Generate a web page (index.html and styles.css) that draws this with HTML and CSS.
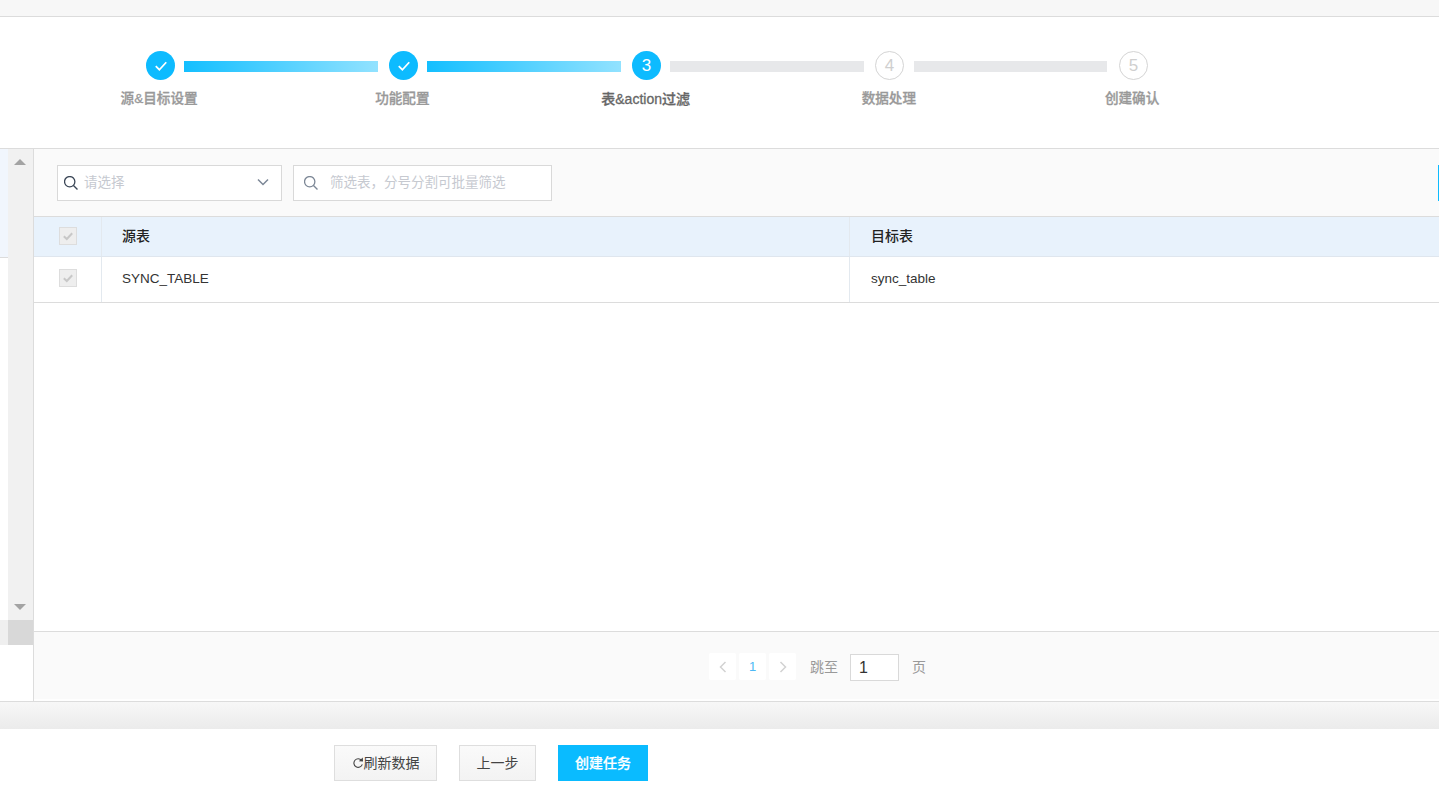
FILE: index.html
```html
<!DOCTYPE html>
<html lang="zh-CN">
<head>
<meta charset="utf-8">
<title>创建任务</title>
<link rel="stylesheet" href="styles.css">
</head>
<body>
<div class="top-band"></div>
<section class="stepper">
  <div class="track">
    <span class="dot done"><svg viewBox="0 0 12 12" class="tick"><path d="M1.5 6.2 4.6 9.2 10.5 2.8"/></svg></span>
    <span class="bar on b1"></span>
    <span class="dot done"><svg viewBox="0 0 12 12" class="tick"><path d="M1.5 6.2 4.6 9.2 10.5 2.8"/></svg></span>
    <span class="bar on b1"></span>
    <span class="dot current">3</span>
    <span class="bar b1"></span>
    <span class="dot todo">4</span>
    <span class="bar b2"></span>
    <span class="dot todo">5</span>
  </div>
  <div class="labels">
    <span>源&amp;目标设置</span>
    <span>功能配置</span>
    <span class="active">表&amp;action过滤</span>
    <span>数据处理</span>
    <span>创建确认</span>
  </div>
</section>
<main class="body">
  <aside class="side">
    <div class="list">
      <div class="list-sel"></div>
      <div class="list-rest"></div>
      <div class="list-end"></div>
    </div>
    <div class="scroll">
      <span class="arrow up"></span>
      <span class="scroll-space"></span>
      <span class="arrow down"></span>
      <span class="thumb"></span>
    </div>
  </aside>
  <div class="content">
    <div class="toolbar">
      <label class="field sel">
        <svg class="mag" viewBox="1.5 1.5 13 13"><circle cx="6.8" cy="6.8" r="4.8"/><path d="M10.3 10.3 14 14"/></svg>
        <input class="inp" placeholder="请选择">
        <svg class="chev" viewBox="0 0 12 8"><path d="M1 1.5 6 6.5 11 1.5"/></svg>
      </label>
      <label class="field flt">
        <svg class="mag grey" viewBox="1.5 1.5 13 13"><circle cx="6.8" cy="6.8" r="4.8"/><path d="M10.3 10.3 14 14"/></svg>
        <input class="inp" placeholder="筛选表，分号分割可批量筛选">
      </label>
      <button class="edge-btn" type="button"></button>
    </div>
    <div class="table">
      <div class="tr head">
        <div class="c0"><span class="chk"><svg viewBox="0 0 12 12"><path d="M1.8 6.2 4.8 9 10.2 3.2"/></svg></span></div>
        <div class="c1">源表</div>
        <div class="c2">目标表</div>
      </div>
      <div class="tr row">
        <div class="c0"><span class="chk"><svg viewBox="0 0 12 12"><path d="M1.8 6.2 4.8 9 10.2 3.2"/></svg></span></div>
        <div class="c1">SYNC_TABLE</div>
        <div class="c2">sync_table</div>
      </div>
    </div>
    <div class="pager">
      <span class="pg"><svg viewBox="0 0 8 12"><path d="M6.5 1 1.5 6 6.5 11"/></svg></span>
      <span class="pg cur">1</span>
      <span class="pg"><svg viewBox="0 0 8 12"><path d="M1.5 1 6.5 6 1.5 11"/></svg></span>
      <span class="jump">跳至</span>
      <input class="page-inp" value="1">
      <span class="unit">页</span>
    </div>
  </div>
</main>
<div class="shade"></div>
<footer class="footer">
  <button class="btn refresh" type="button"><svg viewBox="0 0 12 12"><path d="M9.6 3.4A4.3 4.3 0 1 0 10.3 7.4"/><path class="head-arrow" d="M6.8 4.2 11 4.4 10.8 0.4z"/></svg>刷新数据</button>
  <button class="btn prev" type="button">上一步</button>
  <button class="btn primary" type="button">创建任务</button>
</footer>
</body>
</html>
```
FILE: styles.css
```css
* { box-sizing: border-box; }
html, body { margin: 0; height: 792px; overflow: hidden; background: #fff; }
body { font-family: "Liberation Sans", "Noto Sans CJK SC", sans-serif; font-size: 14px; color: #333; }

.top-band { height: 17px; background: #f7f7f7; border-bottom: 1px solid #dcdcdc; }

.stepper { height: 132px; padding-top: 34px; border-bottom: 1px solid #dcdcdc; background: #fff; }
.track { display: flex; align-items: flex-start; height: 29px; padding-left: 146px; }
.dot { flex: none; width: 29px; height: 29px; border-radius: 50%; display: flex; align-items: center; justify-content: center; font-size: 17px; }
.dot.done, .dot.current { background: #0dbbff; color: #fff; }
.dot.todo { border: 1px solid #d4d4d4; color: #cfcfcf; }
.tick { width: 14px; height: 14px; fill: none; stroke: #fff; stroke-width: 1.5; }
.bar { flex: none; height: 11px; margin: 10px 11px 0 9px; background: #e7e8ea; }
.bar.b1 { width: 194px; }
.bar.b2 { width: 193px; margin-left: 10px; margin-right: 12px; }
.bar.on { background: linear-gradient(90deg, #14bfff, #92e2ff); }
.labels { display: grid; grid-template-columns: repeat(5, 243.25px); margin: 10px 0 0 37.5px; text-align: center; font-size: 13.6px; line-height: 18px; font-weight: 500; color: #999; -webkit-text-stroke: 0.3px currentColor; }
.labels .active { color: #666; font-size: 14px; }

.body { display: flex; height: 553px; border-bottom: 1px solid #dcdcdc; }
.side { flex: none; width: 34px; display: flex; height: 552px; border-right: 1px solid #dcdcdc; }
.list { width: 8px; height: 496px; display: flex; flex-direction: column; }
.list-sel { height: 109px; background: #f1f6fd; border-bottom: 1px solid #dcdcdc; }
.list-rest { flex: 1; background: #fff; }
.list-end { height: 25px; background: #efefef; }
.scroll { width: 25px; height: 496px; background: #f1f1f1; display: flex; flex-direction: column; align-items: center; }
.arrow { flex: none; width: 0; height: 0; margin-right: 1px; border-left: 6px solid transparent; border-right: 6px solid transparent; }
.arrow.up { margin-top: 10px; border-bottom: 6px solid #a3a3a3; }
.arrow.down { margin-bottom: 10px; border-top: 6px solid #a3a3a3; }
.scroll-space { flex: 1; }
.thumb { flex: none; width: 100%; height: 25px; background: #d8d8d8; }

.content { flex: 1; min-width: 0; display: flex; flex-direction: column; overflow: hidden; }
.toolbar { flex: none; height: 68px; padding: 16px 0 0 23px; display: flex; align-items: flex-start; background: #fafafa; border-bottom: 1px solid #dcdcdc; }
.field { flex: none; height: 36px; display: flex; align-items: center; background: #fff; border: 1px solid #d9d9d9; }
.field.sel { width: 225px; padding: 0 12px 0 6px; margin-right: 11px; }
.field.flt { width: 259px; padding-left: 10px; }
.mag { flex: none; width: 14px; height: 14px; fill: none; stroke: #3a4656; stroke-width: 1.2; }
.mag.grey { stroke: #7c8796; }
.inp { flex: 1; min-width: 0; height: 100%; border: 0; outline: 0; background: transparent; padding: 0 0 2px 6px; font: 13.5px "Liberation Sans", "Noto Sans CJK SC", sans-serif; color: #333; }
.flt .inp { padding-left: 12px; }
.inp::placeholder { color: #c6c9d0; opacity: 1; }
.chev { flex: none; width: 12px; height: 8px; margin-top: -2px; fill: none; stroke: #7c8796; stroke-width: 1.5; }
.edge-btn { flex: none; width: 100px; height: 36px; margin-left: auto; margin-right: -99px; border: 0; background: #0dbbff; }

.table { flex: 1; background: #fff; }
.tr { display: flex; border-bottom: 1px solid #dcdcdc; }
.tr.head { height: 40px; background: #e8f2fc; border-bottom-color: #dfe6ee; font-weight: 500; color: #222; font-size: 14px; }
.tr.row { height: 46px; color: #333; font-size: 13.5px; }
.c0, .c1, .c2 { display: flex; align-items: center; }
.tr.head > div { padding-bottom: 3px; }
.tr.row > div { padding-bottom: 3px; }
.tr.head > .c0 { padding-bottom: 1px; }
.c0 { flex: none; width: 68px; justify-content: center; border-right: 1px solid #e3e9ef; }
.c1 { flex: none; width: 748px; padding-left: 20px; border-right: 1px solid #e3e9ef; }
.c2 { flex: 1; padding-left: 21px; }
.chk { width: 18px; height: 18px; display: flex; align-items: center; justify-content: center; background: #eee; border: 1px solid #ddd; }
.chk svg { width: 12px; height: 12px; fill: none; stroke: #c8c8c8; stroke-width: 2; }

.pager { flex: none; height: 70px; display: flex; align-items: flex-start; padding: 21px 0 0 675px; background: #fafafa; border-top: 1px solid #dcdcdc; border-bottom: 2px solid #fefefe; color: #999; line-height: 27px; }
.pg { flex: none; width: 27px; height: 27px; margin-right: 3px; display: flex; align-items: center; justify-content: center; background: #fff; border-radius: 2px; color: #4db8f5; font-size: 13px; }
.pg svg { width: 8px; height: 12px; fill: none; stroke: #d2d2d2; stroke-width: 1.5; }
.jump { margin: 1px 0 0 11px; }
.page-inp { flex: none; width: 49px; height: 27px; margin: 1px 13px 0 12px; padding: 0 0 0 8px; border: 1px solid #d9d9d9; background: #fff; outline: 0; font: 16px "Liberation Sans", sans-serif; color: #333; }
.unit { margin-top: 1px; }

.shade { height: 27px; background: linear-gradient(180deg, #f7f7f7, #ebebeb); }
.footer { height: 63px; padding: 16px 0 0 334px; display: flex; align-items: flex-start; background: #fff; }
.btn { flex: none; height: 36px; padding: 0 0 3px; margin-right: 22px; border: 1px solid #dedede; background: linear-gradient(180deg, #fafafa, #f3f3f3); color: #444; font: 14px "Liberation Sans", "Noto Sans CJK SC", sans-serif; display: flex; align-items: center; justify-content: center; }
.refresh { width: 103px; }
.refresh svg { width: 12px; height: 12px; margin-top: 3px; fill: none; stroke: #444; stroke-width: 1.1; }
.refresh .head-arrow { fill: #444; stroke: none; }
.prev { width: 77px; }
.primary { width: 90px; border: 0; background: #0abbff; color: #fff; font-weight: 500; -webkit-text-stroke: 0.2px currentColor; }
```
